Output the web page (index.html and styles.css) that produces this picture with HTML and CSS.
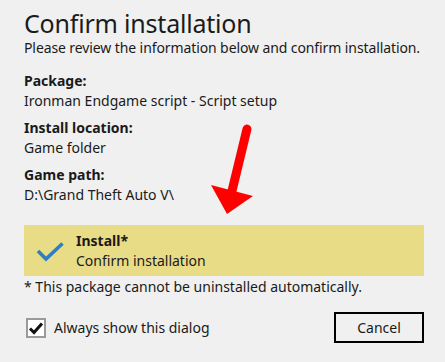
FILE: index.html
```html
<!DOCTYPE html>
<html>
<head>
<meta charset="utf-8">
<link rel="stylesheet" href="styles.css">
</head>
<body>
<div class="dialog">
  <h1 class="title">Confirm installation</h1>
  <p class="subtitle">Please review the information below and confirm installation.</p>
  <div class="info">
    <div class="group">
      <div class="label">Package:</div>
      <div class="value">Ironman Endgame script - Script setup</div>
    </div>
    <div class="group">
      <div class="label">Install location:</div>
      <div class="value">Game folder</div>
    </div>
    <div class="group">
      <div class="label">Game path:</div>
      <div class="value">D:\Grand Theft Auto V\</div>
    </div>
  </div>
  <div class="option">
    <svg class="option-icon" width="28" height="22" viewBox="0 0 28 22">
      <path d="M2 11 L10 19 L26.5 3.5" fill="none" stroke="#2e7ec6" stroke-width="3.6"/>
    </svg>
    <div class="option-text">
      <div class="label">Install*</div>
      <div class="value">Confirm installation</div>
    </div>
  </div>
  <p class="note">* This package cannot be uninstalled automatically.</p>
  <div class="footer">
    <label class="check">
      <span class="box">
        <svg width="16" height="16" viewBox="0 0 16 16">
          <path d="M2 8.5 L6 12.5 L14 3.5" fill="none" stroke="#111" stroke-width="3"/>
        </svg>
      </span>
      <span>Always show this dialog</span>
    </label>
    <button class="cancel">Cancel</button>
  </div>
  <svg class="arrow" width="445" height="362" viewBox="0 0 445 362">
    <line x1="247" y1="129" x2="231" y2="195" stroke="#ff0000" stroke-width="9" stroke-linecap="round"/>
    <polygon points="211,185 253,196 227,214" fill="#ff0000"/>
  </svg>
</div>
</body>
</html>
```
FILE: styles.css
```css
html, body {
  margin: 0;
  padding: 0;
  background: #f0f0f0;
}
* {
  box-sizing: border-box;
}
body {
  font-family: "Noto Sans", "Open Sans", sans-serif;
  font-size: 14px;
  line-height: 20px;
  color: #1a1a1a;
}
.dialog {
  width: 445px;
  padding: 8px 21px 0 24px;
}
.title {
  margin: 0;
  font-size: 25px;
  line-height: 30px;
  font-weight: 400;
  letter-spacing: -0.2px;
  color: #1b1b1b;
}
.subtitle {
  margin: 0;
  letter-spacing: -0.1px;
}
.info {
  margin-top: 13px;
  display: flex;
  flex-direction: column;
  gap: 7px;
}
.label {
  font-weight: 700;
}
.option {
  margin-top: 20px;
  background: #e8dc87;
  display: flex;
  align-items: center;
  padding: 6px 0 5px 12px;
  gap: 12px;
}
.option-icon {
  display: block;
}
.note {
  margin: 1px 0 0;
}
.footer {
  margin-top: 15px;
  display: flex;
  justify-content: space-between;
  align-items: center;
}
.check {
  display: flex;
  align-items: center;
  gap: 8px;
  margin-left: 2px;
}
.box {
  width: 20px;
  height: 20px;
  border: 2px solid #9a9a9a;
  background: #fff;
  display: flex;
  align-items: center;
  justify-content: center;
}
.box svg {
  display: block;
}
.cancel {
  width: 90px;
  height: 31px;
  border: 2px solid #000;
  background: #f0f0f0;
  font: inherit;
  color: #1a1a1a;
  padding: 0;
}
.arrow {
  position: absolute;
  left: 0;
  top: 0;
  pointer-events: none;
}
```
